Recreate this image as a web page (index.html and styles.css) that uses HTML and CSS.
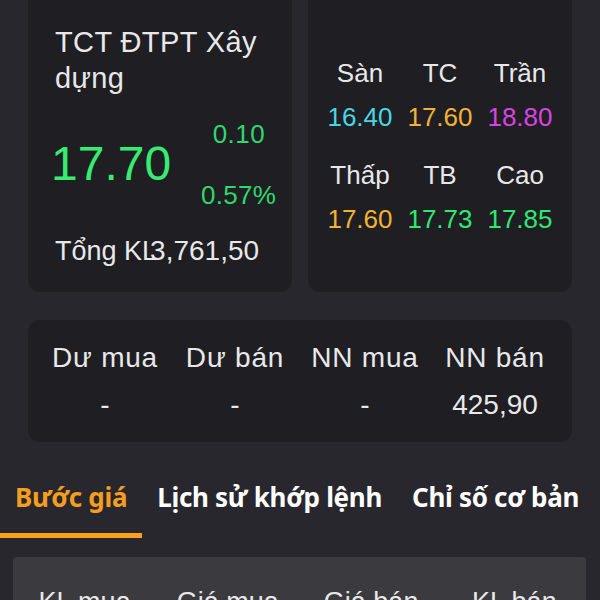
FILE: index.html
```html
<!DOCTYPE html>
<html lang="vi">
<head>
    <meta charset="UTF-8">
    <meta name="viewport" content="width=device-width, initial-scale=1.0">
    <title>TCT ĐTPT Xây dựng</title>
    <link rel="stylesheet" href="styles.css">
</head>
<body>
    <div class="top">
        <div class="card summary">
            <div class="name">TCT ĐTPT Xây dựng</div>
            <div class="price-row">
                <div class="price">17.70</div>
                <div class="change">
                    <span class="abs">0.10</span>
                    <span class="pct">0.57%</span>
                </div>
            </div>
            <div class="volume"><span class="vol-label">Tổng KL</span><span class="vol-value">3,761,50</span></div>
        </div>

        <div class="card ref-prices">
            <div class="ref-grid">
                <span class="lbl">Sàn</span>
                <span class="lbl">TC</span>
                <span class="lbl">Trần</span>
                <span class="val floor">16.40</span>
                <span class="val ref">17.60</span>
                <span class="val ceil">18.80</span>
            </div>
            <div class="ref-grid">
                <span class="lbl">Thấp</span>
                <span class="lbl">TB</span>
                <span class="lbl">Cao</span>
                <span class="val ref">17.60</span>
                <span class="val up">17.73</span>
                <span class="val up">17.85</span>
            </div>
        </div>
    </div>

    <div class="card orders">
        <span class="lbl">Dư mua</span>
        <span class="lbl">Dư bán</span>
        <span class="lbl">NN mua</span>
        <span class="lbl">NN bán</span>
        <span class="val">-</span>
        <span class="val">-</span>
        <span class="val">-</span>
        <span class="val">425,90</span>
    </div>

    <div class="tabs">
        <div class="tab active">Bước giá</div>
        <div class="tab">Lịch sử khớp lệnh</div>
        <div class="tab">Chỉ số cơ bản</div>
    </div>

    <div class="table-head">
        <span>KL mua</span>
        <span>Giá mua</span>
        <span>Giá bán</span>
        <span>KL bán</span>
    </div>
</body>
</html>
```

FILE: styles.css
```css
/* Stock detail screen, dark theme */
body {
    margin: 0;
    padding: 0;
    background-color: #28272d;
    color: #e8e8ea;
    font-family: "Liberation Sans", Arial, sans-serif;
    overflow: hidden;
}

.card {
    background-color: #1f1e22;
    border-radius: 12px;
}

.top {
    display: grid;
    grid-template-columns: 264px 264px;
    gap: 16px;
    padding: 0 28px;
    margin-top: -12px;
}

.summary {
    height: 304px;
    padding: 36px 0 0 27px;
    box-sizing: border-box;
}

.name {
    font-size: 29px;
    line-height: 36px;
    width: 230px;
    letter-spacing: 0.4px;
}

.price-row {
    display: flex;
    align-items: center;
    margin-top: 19px;
}

.price {
    font-size: 48px;
    color: #36ec71;
    width: 150px;
    margin-left: -4px;
}

.change {
    display: flex;
    flex-direction: column;
    align-items: flex-end;
    font-size: 26px;
    color: #2fd86b;
    gap: 30px;
    margin-top: 4px;
}

.change .abs {
    margin-right: 11px;
    letter-spacing: 0.5px;
}

.change .pct {
    letter-spacing: 0.3px;
}

.volume {
    margin-top: 24px;
    font-size: 27px;
}

.vol-value {
    font-size: 28px;
    margin-left: -7px;
}

.ref-prices {
    height: 304px;
    padding: 70px 12px 0;
    box-sizing: border-box;
}

.ref-grid {
    display: grid;
    grid-template-columns: repeat(3, 80px);
    justify-items: center;
    font-size: 26px;
    row-gap: 13px;
    margin-bottom: 27px;
}

.floor { color: #46d7e6; }
.ref { color: #f2b234; }
.ceil { color: #d843e4; }
.up { color: #2fe872; }

.orders {
    display: grid;
    grid-template-columns: repeat(4, 130px);
    justify-items: center;
    row-gap: 15px;
    margin: 28px 28px 0;
    padding: 22px 12px 21px;
    font-size: 28px;
}

.orders .lbl {
    letter-spacing: 0.8px;
}

.tabs {
    display: flex;
    margin-top: 34px;
    font-family: "Noto Sans", sans-serif;
    font-weight: 700;
    font-size: 26px;
    color: #ffffff;
    white-space: nowrap;
}

.tab {
    flex-shrink: 0;
    padding: 3px 15px 18px;
    border-bottom: 5px solid transparent;
    letter-spacing: -0.3px;
}

.tab.active {
    color: #f59d20;
    border-bottom-color: #f8a11b;
}

.table-head {
    display: grid;
    grid-template-columns: repeat(4, 1fr);
    justify-items: center;
    margin: 19px 14px 0 13px;
    padding: 30px 0 20px;
    background-color: #3b3a3f;
    border-radius: 4px 4px 0 0;
    font-size: 27px;
}
```
